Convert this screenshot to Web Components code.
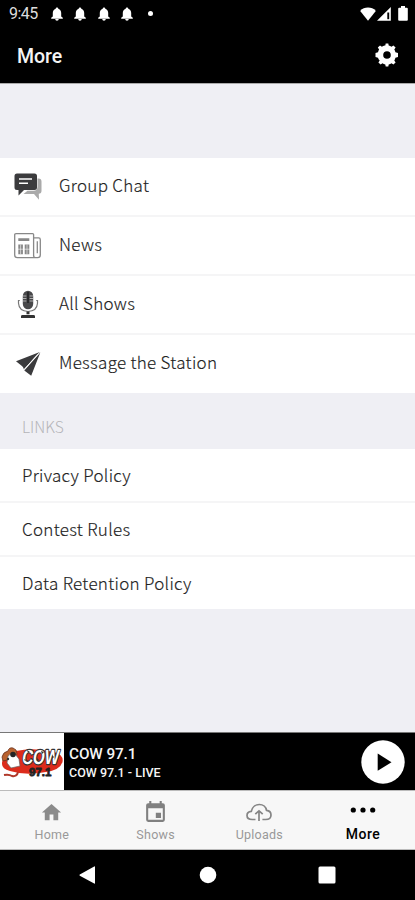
<!DOCTYPE html>
<html lang="en">
<head>
<meta charset="utf-8">
<title>More</title>
<style>
html,body{margin:0;padding:0;background:#efeff4}
body{font-family:Roboto,"Liberation Sans",sans-serif;width:415px;height:900px;overflow:hidden}
</style>
</head>
<body>
<radio-app></radio-app>
<script>
const ICONS = {
  bell: ['0 0 12 14', '<path fill="#fff" d="M6 .4c.9 0 1.300.6 1.300 1.300C9.400 2.400 10.200 4.100 10.200 6v3.400l1.600 1.400v.9H.2v-.9L1.800 9.400V6c0-1.900.8-3.600 2.900-4.300C4.700 1 5.100.4 6 .4zM4.300 12h3.400c0 1-.6 1.700-1.700 1.700S4.300 13 4.300 12z"/>'],
  wifi: ['0 0 16 14', '<path fill="#fff" d="M8 13.800L.2 3.900C2.200 1.700 5 .6 8 .6s5.800 1.100 7.800 3.300z"/>'],
  signal: ['0 0 14 14', '<path fill="#fff" d="M13.800 0v13.800H0z"/><path d="M10.300 5.500h1.900v6.700h-1.900z"/>'],
  battery: ['0 0 10 15', '<path fill="#fff" d="M3 0h4v1.700h1.800q1 0 1 1V14q0 .8-1 .8H1.200q-1 0-1-.8V2.700q0-1 1-1H3z"/>'],
  gear: ['0 0 24 24', '<path fill="#fff" fill-rule="evenodd" d="M10.300 2.600 10.700.5h2.600l.4 2.100q1.500.4 2.800 1.100l1.900-1.300 2.200 2.200-1.300 1.900q.8 1.300 1.100 2.800l2.600.7v4l-2.600.7q-.3 1.500-1.100 2.800l1.300 1.900-2.200 2.200-1.900-1.300q-1.300.7-2.800 1.100l-.4 2.100h-2.600l-.4-2.100q-1.500-.4-2.800-1.100l-1.900 1.300-2.200-2.200 1.300-1.900Q3.400 16.200 3 14.700L.5 14v-4L3 9.300q.4-1.500 1.100-2.800L2.800 4.600 5 2.400l1.900 1.300q1.300-.7 2.800-1.100zM12 8.200a3.800 3.800 0 1 0 0 7.600 3.800 3.800 0 0 0 0-7.600z"/>'],
  chat: ['0 0 30 30', '<path fill="#aaa" d="M24.500 6.500h1q3 0 3 3V19q0 2.500-2.700 2.700l.2 6.100-5-5.800H10.500l4-3.200h6q4 0 4-4z"/><path fill="#3b3b3d" d="M4 1.500h17.500q2.500 0 2.500 2.500v11.500q0 2.500-2.500 2.500H11l-5.500 5.500V18H4q-2.500 0-2.500-2.500V4q0-2.500 2.500-2.500z"/><path stroke="#fff" stroke-width="1.500" d="M6 7h13M6 11.300h9"/>'],
  news: ['0 0 30 30', '<g fill="none" stroke="#888" stroke-width="1.300"><path d="M20.600 25V2.600q0-1-1-1H3q-1.300 0-1.300 1.300v21q0 2.700 2.700 2.700h20.200q2.700 0 2.700-2.700V8q0-1.800-1.600-1.800H20.600M20.600 24q0 2.600 2 2.600M24.300 9.500V22"/></g><path fill="#888" d="M5.300 6.500h11v2.700h-11zM5.300 13h4.600v10H5.300zM11.700 13h4.600v10h-4.600z"/><path stroke="#fff" stroke-width=".6" d="M5 17.800h12M7.600 13v10M14 13v10"/>'],
  mic: ['0 0 30 30', '<rect x="9.800" y=".8" width="10.400" height="18.500" rx="5.200" fill="#48484a"/><path stroke="#bbb" stroke-width=".9" d="M10 6h3.400M16.600 6H20M10 8.500h3.400M16.600 8.500H20M10 11h3.400M16.600 11H20"/><path stroke="#29292b" stroke-width="2" d="M15 2v11"/><path fill="none" stroke="#777" stroke-width="1.200" d="M6.800 10.500h-1.300v2.700Q6 21 15 21.500q9-.5 9.500-8.300v-2.700h-1.300"/><path fill="#333" d="M13.500 21.500h3v2.800h-3zM8 26.200q0-1.200 1.500-1.200h11q1.500 0 1.500 1.200v1.900H8z"/>'],
  plane: ['0 0 30 30', '<path fill="#3b3b3d" d="M26.800 3 3 12.300l7.500 6zM27.300 3.500 18.200 26.800 11.300 21.500z"/><path fill="#3b3b3d" d="M9.500 17 25 4.500 11 20.500z"/><path stroke="#fff" stroke-width=".9" d="M25.600 4.700 11 20.500"/>'],
  home: ['0 0 24 24', '<path fill="#8b8b8b" d="M10 20v-6h4v6h5v-8h3L12 3 2 12h3v8z"/>'],
  calendar: ['0 0 24 24', '<path fill="#808080" fill-rule="evenodd" d="M6 1h2v2h8V1h2v2h1q2 0 2 2v14q0 2-2 2H5q-2 0-2-2V5q0-2 2-2h1zM5 8v11h14V8zM12.300 12.300h5v5h-5z"/>'],
  cloud: ['0 0 26 22', '<path fill="none" stroke="#858585" stroke-width="1.700" d="M9.500 18.200H6.300C2.900 18.200 1 16.300 1 13.700c0-2.500 1.800-4.300 4.300-4.500C6 4.900 9.100 1.700 13.300 1.700c3.800 0 6.700 2.600 7.200 6.400 2.700.3 4.500 2.100 4.500 5 0 3.100-2.100 5.100-5.400 5.100h-3.200M13 19.800v-11M9.300 12.200 13 8.500l3.700 3.700"/>'],
  dots: ['0 0 26 6', '<circle cx="3.300" cy="3" r="2.600"/><circle cx="13" cy="3" r="2.600"/><circle cx="22.700" cy="3" r="2.600"/>'],
  play: ['0 0 44 44', '<circle cx="22" cy="22" r="21.700" fill="#fff"/><path d="M16.700 13.500v17.300L30.500 22.200z"/>'],
  back: ['0 0 18 18', '<path fill="#fff" d="M16 .7v16.600q0 .7-.8.300L.8 9.700q-.8-.6 0-1.200L15.200.4q.8-.4.8.3z"/>'],
  circle: ['0 0 18 18', '<circle cx="9" cy="9" r="8.300" fill="#fff"/>'],
  square: ['0 0 18 18', '<rect x=".5" y=".5" width="17" height="17" rx="1.500" fill="#fff"/>']
};

class UiIcon extends HTMLElement {
  connectedCallback() {
    const [box, art] = ICONS[this.getAttribute('name')];
    const w = this.getAttribute('w'), h = this.getAttribute('h') || w;
    this.attachShadow({mode: 'open'}).innerHTML =
      `<style>:host{display:block;flex:none;width:${w}px;height:${h}px}svg{display:block;width:100%;height:100%}</style><svg viewBox="${box}" preserveAspectRatio="none">${art}</svg>`;
  }
}

function define(name, markup) {
  const t = document.createElement('template');
  t.innerHTML = markup;
  customElements.define(name, class extends HTMLElement {
    constructor() {
      super();
      this.attachShadow({mode: 'open'}).append(t.content.cloneNode(true));
    }
  });
}
customElements.define('ui-icon', UiIcon);

define('status-bar', `<style>
:host{display:flex;align-items:center;box-sizing:border-box;height:27px;padding:0 7px 0 9px;color:#ddd;font-size:16px}
.time{width:41.500px;letter-spacing:-.5px}
.bells{display:flex;gap:11.500px}
.dot{width:5px;height:5px;border-radius:50%;background:#fff;margin-left:14.500px}
.right{display:flex;gap:1px;margin-left:auto;align-items:center}
.right :last-child{margin-left:6px}
</style><span class="time">9:45</span><div class="bells"><ui-icon name="bell" w="12" h="14"></ui-icon><ui-icon name="bell" w="12" h="14"></ui-icon><ui-icon name="bell" w="12" h="14"></ui-icon><ui-icon name="bell" w="12" h="14"></ui-icon></div><i class="dot"></i>
<div class="right"><ui-icon name="wifi" w="16" h="14"></ui-icon><ui-icon name="signal" w="14"></ui-icon><ui-icon name="battery" w="10" h="15"></ui-icon></div>`);

define('title-bar', `<style>
:host{display:flex;align-items:center;justify-content:space-between;box-sizing:border-box;height:56px;padding:0 16px 0 17px;color:#f4f4f4;font-size:19.500px;font-weight:500}
span{padding-top:2px}
</style><span><slot></slot></span><ui-icon name="gear" w="24"></ui-icon>`);

define('menu-row', `<style>
:host{display:flex;align-items:center;box-sizing:border-box;height:59px;padding:2px 0 1px 13px;gap:16px;background:#fff;border-bottom:2px solid #f5f5f6;color:#222;font:300 17px "Noto Sans CJK JP","Noto Sans",sans-serif;letter-spacing:.3px;-webkit-text-stroke:.15px #222}
:host([link]){height:54px;padding:0 0 1px 22px}
:host([link]) slot[name]{display:none}
:host([last]){border-bottom-color:#fff}
:host([last]:not([link])){height:58px}
:host([last][link]){height:52px;border-bottom:0}
slot{display:block;white-space:nowrap}
span{padding-bottom:5px}
:host([link]) span{padding-bottom:0}
</style><slot name="icon"></slot><span><slot></slot></span>`);

define('section-title', `<style>
:host{display:flex;align-items:flex-end;box-sizing:border-box;height:56px;padding:0 22px 11px;color:#b4b4b8;font:300 15.500px/24px "Noto Sans CJK JP","Noto Sans",sans-serif}
</style><slot></slot>`);

define('station-logo', `<style>
:host{display:block;width:64px;height:57px;background:#fff}svg{display:block}
text{font-family:"Liberation Sans",sans-serif;font-weight:bold;paint-order:stroke;stroke-linejoin:round}
</style><svg width="64" height="57" viewBox="0 0 64 57">
<path d="M2 31Q2 21 16 18Q34 14 54 19Q64 22 62.500 29Q60 37 46 39Q26 43 10 38Q2 36 2 31z" fill="#dc2c1c"/>
<path d="M18 39q-1 5-6 4-3-2-8-1" fill="none" stroke="#b0392a" stroke-width="2"/>
<path d="M2 24q1-5 6-6 1-4 5-3l3 2q2 4 0 7l-9 3-4 1z" fill="#b9622f" stroke="#6b3421" stroke-width=".8"/>
<path d="M8 23q3-4 7-2l4 5 1 7-9 2-4-5z" fill="#fff" stroke="#666" stroke-width=".7"/>
<circle cx="13" cy="21.500" r="2.800" fill="#252525"/><circle cx="8" cy="26" r="1.200" fill="#333"/>
<text transform="translate(21.500 30.500) skewX(-8) scale(1 1.350)" font-size="15" fill="#fff" stroke="#333" stroke-width="1.800">COW</text>
<path d="M27 17l3 2-2 1zM37 25l2 2-2 1zM41 18l3 1-2 2zM52 22l2 2-2 2zM24 26l2 1-1 1z" fill="#333"/>
<text x="29" y="43" font-size="11.500" fill="#222" stroke="#222" stroke-width=".8">97.1</text>
</svg>`);

define('player-bar', `<style>
:host{display:flex;align-items:center;box-sizing:border-box;height:58px;padding-right:10px;background:#000;color:#f5f5f5;border-top:1px solid #777}
.info{flex:1;padding:1px 0 0 5px;font-weight:500;white-space:nowrap}
.a{font-size:15.300px;line-height:20px;letter-spacing:-.1px}.b{font-size:12.500px;line-height:16px;margin-top:1px}
</style><station-logo></station-logo><div class="info"><div class="a"><slot name="station"></slot></div><div class="b"><slot></slot></div></div><ui-icon name="play" w="44"></ui-icon>`);

define('tab-item', `<style>
:host{display:grid;grid-template-rows:25px 16px;justify-items:center;align-items:center;align-content:start;gap:2px;padding-top:9px;color:#999;font-size:12.500px;letter-spacing:.25px}
:host([active]){color:#000;font-weight:500;font-size:14px;letter-spacing:.5px}
:host([active]) .pic{transform:translateY(-3px)}
:host([active]) .label{padding-bottom:2px}
.label{line-height:16px}
</style><div class="pic"><slot name="icon"></slot></div><span class="label"><slot></slot></span>`);

define('tab-bar', `<style>
:host{display:grid;grid-template-columns:repeat(4,1fr);box-sizing:border-box;height:60px;background:#f7f7f7;border-top:1px solid #bbb;border-bottom:1px solid #bbb}
</style><slot></slot>`);

define('system-nav', `<style>
:host{display:flex;justify-content:space-between;align-items:center;box-sizing:border-box;height:50px;padding:0 79px;background:#000}
</style><ui-icon name="back" w="18"></ui-icon><ui-icon name="circle" w="18"></ui-icon><ui-icon name="square" w="18"></ui-icon>`);

define('radio-app', `<style>
:host{display:flex;flex-direction:column;width:415px;height:900px;background:#efeff4}
header{background:#000;height:83px;border-bottom:1px solid #aaa;flex:none}
main{flex:1;padding-top:74px;min-height:0}
</style>
<header><status-bar></status-bar><title-bar>More</title-bar></header>
<main>
<menu-row><ui-icon slot="icon" name="chat" w="30"></ui-icon>Group Chat</menu-row>
<menu-row><ui-icon slot="icon" name="news" w="30" h="29"></ui-icon>News</menu-row>
<menu-row><ui-icon slot="icon" name="mic" w="30"></ui-icon>All Shows</menu-row>
<menu-row last><ui-icon slot="icon" name="plane" w="30"></ui-icon>Message the Station</menu-row>
<section-title>LINKS</section-title>
<menu-row link>Privacy Policy</menu-row>
<menu-row link>Contest Rules</menu-row>
<menu-row link last>Data Retention Policy</menu-row>
</main>
<player-bar><span slot="station">COW 97.1</span>COW 97.1 - LIVE</player-bar>
<tab-bar>
<tab-item><ui-icon slot="icon" name="home" w="23"></ui-icon>Home</tab-item>
<tab-item><ui-icon slot="icon" name="calendar" w="25"></ui-icon>Shows</tab-item>
<tab-item><ui-icon slot="icon" name="cloud" w="26" h="20"></ui-icon>Uploads</tab-item>
<tab-item active><ui-icon slot="icon" name="dots" w="26" h="6"></ui-icon>More</tab-item>
</tab-bar>
<system-nav></system-nav>`);
</script>
</body>
</html>
